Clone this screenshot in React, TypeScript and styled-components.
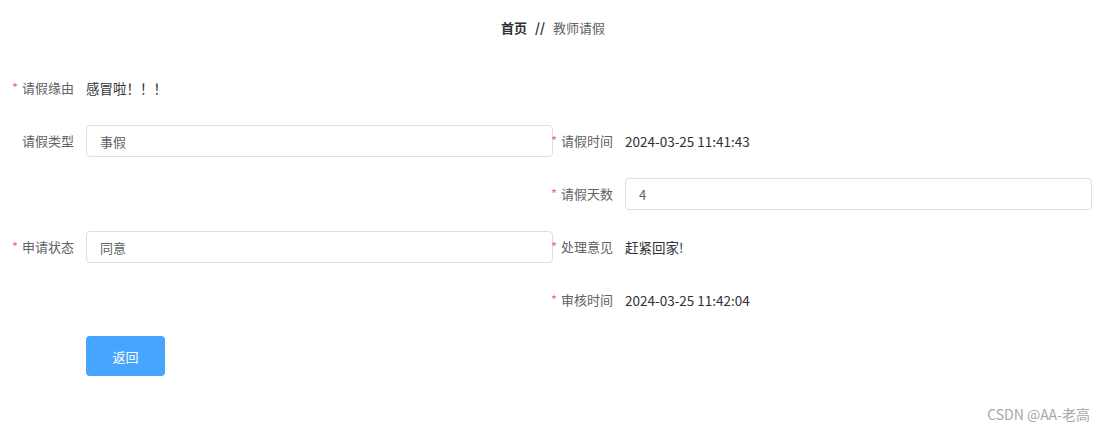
import React from 'react'
import styled, { createGlobalStyle } from 'styled-components'

const GlobalStyle = createGlobalStyle`
  html, body {
    margin: 0;
    padding: 0;
    background: #fff;
  }
  body {
    font-family: "Noto Sans CJK SC", "Noto Sans", sans-serif;
    font-size: 13px;
    color: #606266;
  }
`

type Field = {
  label: string
  required?: boolean
  value?: string
  input?: boolean
}

const rows: Array<[Field | null, Field | null]> = [
  [{ label: '请假类型', value: '事假', input: true }, { label: '请假时间', required: true, value: '2024-03-25 11:41:43' }],
  [null, { label: '请假天数', required: true, value: '4', input: true }],
  [{ label: '申请状态', required: true, value: '同意', input: true }, { label: '处理意见', required: true, value: '赶紧回家!' }],
  [null, { label: '审核时间', required: true, value: '2024-03-25 11:42:04' }],
]

const FormItem: React.FC<{ field: Field; labelWidth: number }> = ({ field, labelWidth }) => (
  <Item>
    <Label $width={labelWidth}>
      {field.required && <Star>*</Star>}
      {field.label}
    </Label>
    <Content>
      {field.input ? <TextBox readOnly defaultValue={field.value} /> : <Plain>{field.value}</Plain>}
    </Content>
  </Item>
)

const App: React.FC = () => {
  return (
    <Page>
      <GlobalStyle />
      <Crumbs>
        <b>首页</b>
        <Sep>//</Sep>
        <span>教师请假</span>
      </Crumbs>
      <Form>
        <Row>
          <FormItem field={{ label: '请假缘由', required: true, value: '感冒啦！！！' }} labelWidth={86} />
        </Row>
        {rows.map(([left, right], i) => (
          <Row key={i}>
            <LeftCol>{left && <FormItem field={left} labelWidth={86} />}</LeftCol>
            <RightCol>{right && <FormItem field={right} labelWidth={72} />}</RightCol>
          </Row>
        ))}
        <Row>
          <Actions>
            <BackButton>返回</BackButton>
          </Actions>
        </Row>
      </Form>
      <Watermark>CSDN @AA-老高</Watermark>
    </Page>
  )
}

export default App

const Page = styled.div`
  position: relative;
  width: 1104px;
  height: 431px;
  overflow: hidden;
`

const Crumbs = styled.div`
  height: 56px;
  line-height: 56px;
  text-align: center;
  font-size: 13px;
  color: #606266;
  padding-left: 2px;
  b {
    color: #303133;
    font-weight: 700;
  }
`

const Sep = styled.span`
  margin: 0 8px;
  font-weight: 700;
  color: #303133;
`

const Form = styled.div`
  margin-top: 16px;
  padding-right: 12px;
  display: flex;
  flex-direction: column;
  gap: 21px;
`

const Row = styled.div`
  display: flex;
  min-height: 32px;
`

const LeftCol = styled.div`
  width: 553px;
  flex: none;
`

const RightCol = styled.div`
  flex: 1;
`

const Item = styled.div`
  display: flex;
  align-items: center;
  height: 32px;
`

const Label = styled.label<{ $width: number }>`
  width: ${(p) => p.$width}px;
  flex: none;
  box-sizing: border-box;
  display: flex;
  justify-content: flex-end;
  align-items: center;
  padding-right: 12px;
  white-space: nowrap;
  color: #606266;
  font-size: 13px;
  line-height: 32px;
`

const Star = styled.span`
  color: #f56c6c;
  margin-right: 4px;
`

const Content = styled.div`
  flex: 1;
  display: flex;
  align-items: center;
`

const Plain = styled.span`
  color: #303133;
  font-size: 13.5px;
`

const TextBox = styled.input`
  width: 100%;
  height: 32px;
  box-sizing: border-box;
  border: 1px solid #dcdfe6;
  border-radius: 4px;
  padding: 0 13px;
  font-family: "Noto Sans CJK SC", "Noto Sans", sans-serif;
  font-size: 13px;
  color: #606266;
  outline: none;
  background: #fff;
`

const Actions = styled.div`
  padding-left: 86px;
  margin-top: -1px;
`

const BackButton = styled.button`
  width: 79px;
  height: 40px;
  border: none;
  border-radius: 4px;
  background: #46a5ff;
  color: #fff;
  font-family: "Noto Sans CJK SC", "Noto Sans", sans-serif;
  font-size: 13px;
  cursor: pointer;
`

const Watermark = styled.div`
  position: absolute;
  right: 14px;
  bottom: 7px;
  font-family: "Noto Sans CJK SC", "Noto Sans", sans-serif;
  font-size: 14px;
  color: #a8a8a8;
`
